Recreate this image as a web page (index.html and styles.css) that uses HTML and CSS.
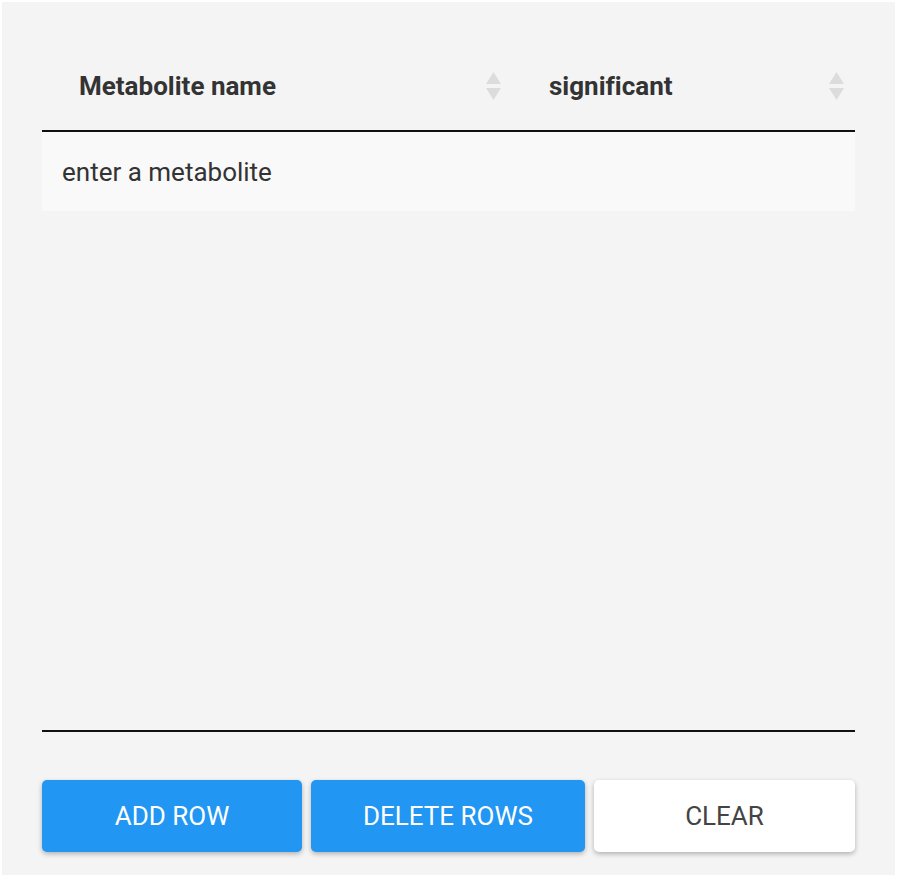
FILE: index.html
```html
<!DOCTYPE html>
<html>
<head>
<meta charset="utf-8">
<link rel="stylesheet" href="styles.css">
</head>
<body>
<div class="panel">
  <div class="table">
    <div class="thead">
      <div class="th col1">
        <span class="th-label">Metabolite name</span>
        <svg class="sort" width="17" height="30" viewBox="0 0 17 30"><path d="M8.5 1 L16 13 L1 13 Z" fill="#dcdcdc"/><path d="M8.5 29 L16 17 L1 17 Z" fill="#dcdcdc"/></svg>
      </div>
      <div class="th col2">
        <span class="th-label">significant</span>
        <svg class="sort" width="17" height="30" viewBox="0 0 17 30"><path d="M8.5 1 L16 13 L1 13 Z" fill="#dcdcdc"/><path d="M8.5 29 L16 17 L1 17 Z" fill="#dcdcdc"/></svg>
      </div>
    </div>
    <div class="tbody">
      <div class="tr">
        <div class="td col1">enter a metabolite</div>
        <div class="td col2"></div>
      </div>
    </div>
  </div>
  <div class="actions">
    <button class="btn btn-primary">ADD ROW</button>
    <button class="btn btn-primary">DELETE ROWS</button>
    <button class="btn btn-light">CLEAR</button>
  </div>
</div>
</body>
</html>
```

FILE: styles.css
```css
html, body {
  margin: 0;
  padding: 0;
  background: #ffffff;
}
body {
  font-family: Roboto, "Liberation Sans", sans-serif;
  color: #333333;
  font-variant-ligatures: none;
}
.panel {
  margin: 2px;
  width: 893px;
  height: 873px;
  box-sizing: border-box;
  background: #f4f4f4;
  padding: 40px 40px 0 40px;
  display: flex;
  flex-direction: column;
}
.table {
  display: flex;
  flex-direction: column;
}
.thead {
  display: flex;
  height: 88px;
  border-bottom: 2px solid #111111;
}
.th {
  display: flex;
  align-items: center;
  justify-content: space-between;
  box-sizing: border-box;
  font-weight: 700;
  font-size: 26px;
  color: #333333;
  padding: 0 10px 0 37px;
}
.col1 { width: 470px; }
.col2 { width: 343px; }
.sort { display: block; }
.tbody {
  height: 598px;
  border-bottom: 2px solid #111111;
}
.tr {
  display: flex;
  height: 79px;
  background: #f9f9f9;
}
.td {
  display: flex;
  align-items: center;
  box-sizing: border-box;
  font-size: 26px;
  color: #333333;
  padding-left: 20px;
}
.actions {
  display: grid;
  grid-template-columns: 260px 274px 261px;
  column-gap: 9px;
  margin-top: 48px;
}
.btn {
  height: 72px;
  border: none;
  border-radius: 5px;
  font-family: Roboto, "Liberation Sans", sans-serif;
  font-size: 26px;
  font-weight: 400;
  box-shadow: 0 2px 5px rgba(0, 0, 0, 0.28);
  padding: 0;
}
.btn-primary {
  background: #2196f3;
  color: #ffffff;
}
.btn-light {
  background: #ffffff;
  color: #444444;
}
```
